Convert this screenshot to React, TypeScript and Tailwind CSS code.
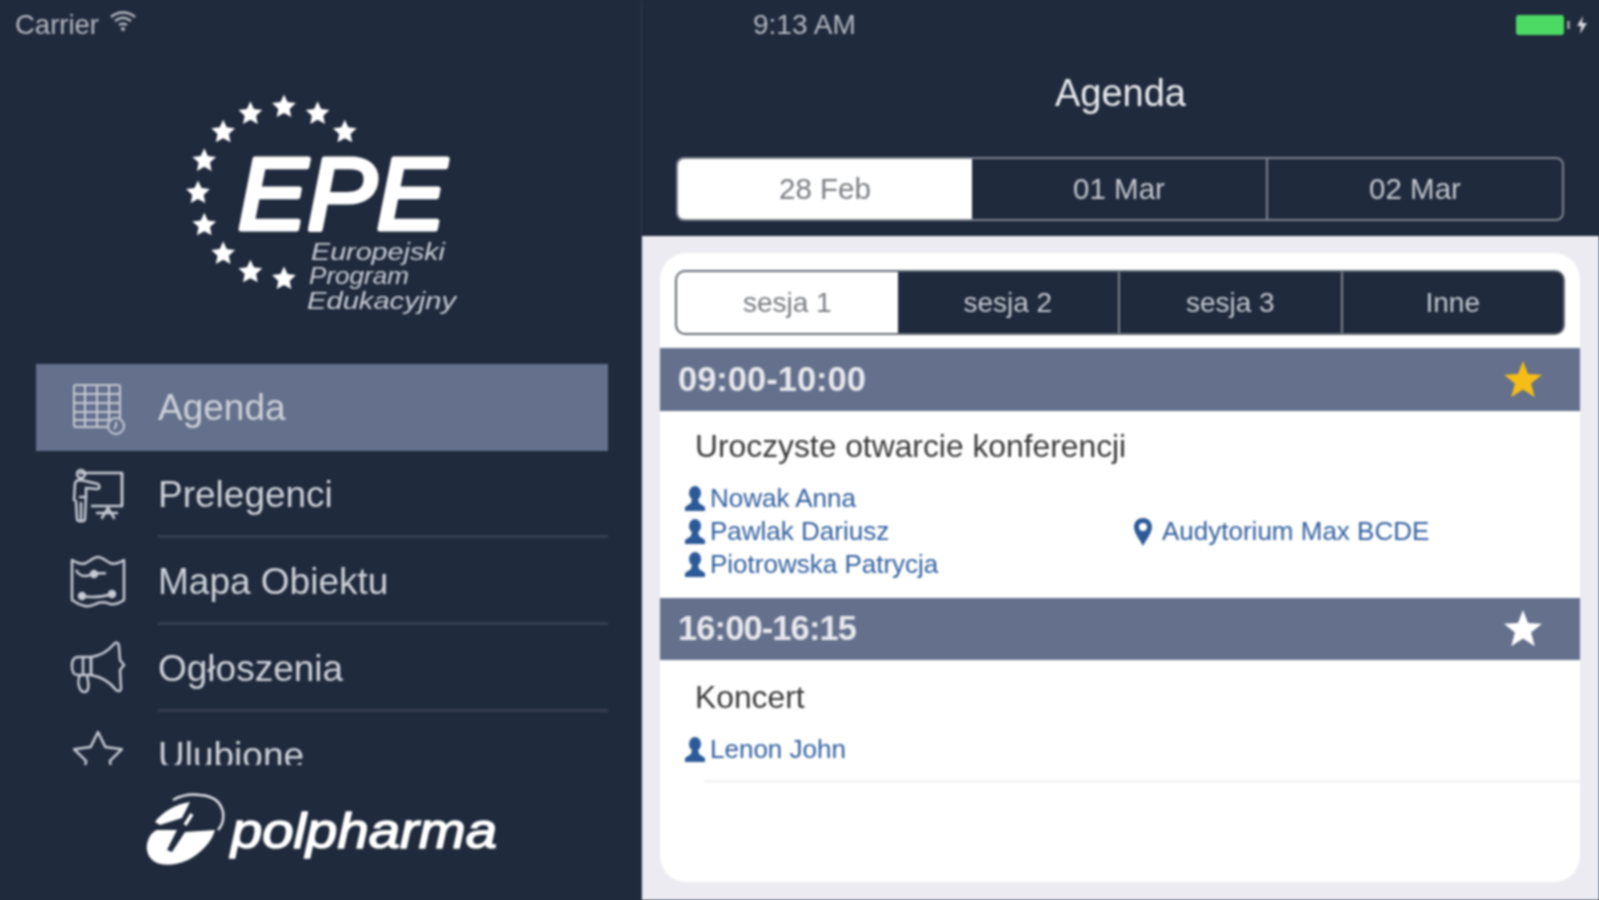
import React from 'react';

const sans = 'font-["Liberation_Sans",Arial,sans-serif]';

const starPoints = (cx: number, cy: number, outer: number, inner: number) => {
    const pts: string[] = [];
    for (let i = 0; i < 10; i++) {
        const r = i % 2 === 0 ? outer : inner;
        const a = (Math.PI / 5) * i - Math.PI / 2;
        pts.push(`${(cx + r * Math.cos(a)).toFixed(1)},${(cy + r * Math.sin(a)).toFixed(1)}`);
    }
    return pts.join(' ');
};

const CalendarIcon = () => (
    <svg width="56" height="56" viewBox="0 0 56 56" fill="none" stroke="#c5cad4" strokeWidth="2">
        <rect x="4" y="5" width="46" height="42" rx="2" />
        <path d="M4 14h46M4 23h46M4 32h46M4 40h40M15 5v42M27 5v42M39 5v36" />
        <circle cx="46" cy="46" r="8" fill="#64708c" />
        <path d="M46 42v4l-2 3" />
    </svg>
);

const PresenterIcon = () => (
    <svg width="56" height="56" viewBox="0 0 56 56" fill="none" stroke="#c5cad4" strokeWidth="2.500" strokeLinejoin="round" strokeLinecap="round">
        <path d="M10 6h42v33H22" />
        <path d="M52 6v33" />
        <circle cx="11" cy="7" r="4" />
        <path d="M5 17c0-3 3-4 6-4l17 4c2 1 2 5-1 5l-11-1v8l-1 23c0 3-8 3-8 0l-1-18-2-1z" />
        <path d="M10 30h6M11 36v16" />
        <path d="M38 41l-6 10M38 41l6 10M27 46h20" />
    </svg>
);

const MapIcon = () => (
    <svg width="56" height="56" viewBox="0 0 56 56" fill="none" stroke="#c5cad4" strokeWidth="2.500" strokeLinejoin="round">
        <path d="M2 6c5 3 9 5 14 3 4-2 8-6 12-6s8 4 12 6c5 2 9 0 14-3v40c-6 4-10 5-14 4-4-2-8-2-12-1-5 2-8 4-13 3-5-1-9-3-13-6z" />
        <path d="M6 16c3 6 8 7 14 5 6-3 12-1 16-2" />
        <circle cx="24" cy="20" r="3" fill="#c5cad4" />
        <circle cx="12" cy="42" r="3" fill="#c5cad4" />
        <circle cx="42" cy="40" r="3" fill="#c5cad4" />
        <path d="M12 42c9 2 20 1 30-2" />
    </svg>
);

const MegaphoneIcon = () => (
    <svg width="56" height="56" viewBox="0 0 56 56" fill="none" stroke="#c5cad4" strokeWidth="2.500" strokeLinejoin="round">
        <path d="M21 16c10-1 18-7 24-14 3-1 4 1 4 4l1 13 4 5-4 5 1 18c0 3-2 4-5 2-6-8-14-13-25-15z" />
        <path d="M21 16H8c-4 0-6 3-6 9 0 7 2 9 6 9h13z" />
        <path d="M10 34c-2 4-2 10 0 14 2 4 7 4 8 0 1-4 0-9-1-13" />
        <path d="M13 16v18" />
    </svg>
);

const StarOutlineIcon = () => (
    <svg width="56" height="56" viewBox="0 0 56 56" fill="none" stroke="#c5cad4" strokeWidth="2.500" strokeLinejoin="round">
        <polygon points={starPoints(28, 29, 25, 12.500)} />
    </svg>
);

const menu = [
    { label: 'Agenda', icon: <CalendarIcon />, active: true, line: false },
    { label: 'Prelegenci', icon: <PresenterIcon />, active: false, line: true },
    { label: 'Mapa Obiektu', icon: <MapIcon />, active: false, line: true },
    { label: 'Ogłoszenia', icon: <MegaphoneIcon />, active: false, line: true },
    { label: 'Ulubione', icon: <StarOutlineIcon />, active: false, line: false },
];

const EpeLogo = () => {
    const angles = [-90, -67, -45, -113, -135, -158, 180, 158, 135, 113, 90];
    return (
        <svg width="300" height="240" viewBox="0 0 300 240" className="ml-[178px] mt-[40px]">
            {angles.map((a) => {
                const x = 106 + 86 * Math.cos((a * Math.PI) / 180);
                const y = 103 + 86 * Math.sin((a * Math.PI) / 180);
                return <polygon key={a} points={starPoints(x, y, 12.500, 6)} fill="#ffffff" />;
            })}
            <text x="60" y="139" fill="#ffffff" stroke="#ffffff" strokeWidth="5" strokeLinejoin="round" fontFamily="Liberation Sans" fontStyle="italic" fontSize="102" textLength="208" lengthAdjust="spacingAndGlyphs">EPE</text>
            <g fill="#c9cdd6" fontFamily="Liberation Sans" fontStyle="italic" fontSize="23">
                <text x="133" y="170" textLength="134" lengthAdjust="spacingAndGlyphs">Europejski</text>
                <text x="131" y="194" textLength="100" lengthAdjust="spacingAndGlyphs">Program</text>
                <text x="129" y="219" textLength="149" lengthAdjust="spacingAndGlyphs">Edukacyjny</text>
            </g>
        </svg>
    );
};

const PolpharmaLogo = () => (
    <svg width="370" height="80" viewBox="0 0 370 80" className="ml-[144px] mt-[27px]">
        <path d="M3 52C5 44 8 40 13 38L33 38 23 58 28 60 41 40 71 38C68 50 56 62 44 68 30 74 18 74 11 70 4 66 2 58 3 52z" fill="#ffffff" />
        <path d="M11 30C18 20 32 12 46 10L38 26 16 33z" fill="#ffffff" />
        <path d="M29 8C38 3 48 2 56 3 68 4 76 8 79 20 80 28 78 34 74 38" fill="none" stroke="#dfe2e7" strokeWidth="2.500" />
        <path d="M48 22 41 33" stroke="#ffffff" strokeWidth="3.500" />
        <text x="87" y="56" fill="#ffffff" stroke="#ffffff" strokeWidth="1.500" strokeLinejoin="round" fontFamily="Liberation Sans" fontStyle="italic" fontSize="50" textLength="266" lengthAdjust="spacingAndGlyphs">polpharma</text>
    </svg>
);

const Segments: React.FC<{ items: string[]; className: string; textClass: string }> = ({ items, className, textClass }) => (
    <div className={`flex border-2 overflow-hidden bg-[#1f2a3c] ${className}`}>
        {items.map((item, i) => (
            <div
                key={item}
                className={`flex-1 flex items-center justify-center ${textClass} ${
                    i === 0 ? 'bg-white text-[#7a7d82]' : 'text-[#c3c7ce]'
                } ${i > 1 ? 'border-l-2 border-[#7d838e]' : ''}`}
            >
                {item}
            </div>
        ))}
    </div>
);

const Person = () => (
    <svg width="24" height="28" viewBox="0 0 24 28" fill="#2c5a98" className="shrink-0">
        <ellipse cx="12" cy="8" rx="6" ry="7" />
        <path d="M9 13h6l1 5 6 4v4H2v-4l6-4z" />
    </svg>
);

const Pin = () => (
    <svg width="20" height="30" viewBox="0 0 20 30" className="shrink-0">
        <path d="M10 1C4.500 1 1 5 1 10c0 6 6 13 9 19 3-6 9-13 9-19 0-5-3.500-9-9-9z" fill="#2c5a98" />
        <circle cx="10" cy="10" r="4" fill="#ffffff" />
    </svg>
);

const SlotHeader: React.FC<{ time: string; fav: boolean; className: string }> = ({ time, fav, className }) => (
    <div className={`flex items-center justify-between pl-[18px] pr-[38px] bg-[#64708c] ${className}`}>
        <span className="text-[34.500px] font-bold text-[#e6e8ec]">{time}</span>
        <svg width="38" height="38" viewBox="0 0 38 38">
            <polygon points={starPoints(19, 20, 20, 8.500)} fill={fav ? '#f6bd16' : '#ffffff'} />
        </svg>
    </div>
);

const SpeakerRow: React.FC<{ name: string }> = ({ name }) => (
    <div className="flex items-center h-[33px] gap-[3px] text-[26px] text-[#33609e]">
        <Person />
        <span>{name}</span>
    </div>
);

export default function App() {
    return (
        <div className="w-[1599px] h-[900px] overflow-hidden bg-[#1f2a3c]">
            <div className={`flex w-[1599px] h-[900px] bg-[#1f2a3c] blur-[0.8px] ${sans}`}>
                {/* side menu */}
                <aside className="w-[642px] shrink-0 border-r border-[#323d50] flex flex-col">
                    <div className="flex items-center h-[50px] pl-[15px] gap-[10px] text-[27.500px] text-[#b4b8c0]">
                        <span>Carrier</span>
                        <svg width="28" height="22" viewBox="0 0 28 22" fill="none" stroke="#b4b8c0" strokeWidth="2.500" className="-mt-[6px]">
                            <path d="M2 6c7-6 17-6 24 0M6 10c5-4 11-4 16 0M10 14c3-2 5-2 8 0" />
                            <circle cx="14" cy="18" r="2" fill="#b4b8c0" stroke="none" />
                        </svg>
                    </div>
                    <EpeLogo />
                    <div className="h-[401px] mt-[34px] overflow-hidden ml-[36px] mr-[33px]">
                        {menu.map((m) => (
                            <div key={m.label} className={`flex h-[87px] ${m.active ? 'bg-[#64708c]' : ''}`}>
                                <div className="w-[122px] pl-[34px] shrink-0 flex items-center">{m.icon}</div>
                                <div className={`flex-1 flex items-center text-[37px] text-[#cdd1d9] ${m.line ? 'shadow-[inset_0_-3px_0_#353f51]' : ''}`}>
                                    {m.label}
                                </div>
                            </div>
                        ))}
                    </div>
                    <PolpharmaLogo />
                </aside>

                {/* agenda */}
                <main className="flex-1 flex flex-col min-w-0">
                    <div className="h-[236px] shrink-0 flex flex-col">
                        <div className="flex items-center justify-between h-[50px] pl-[111px] pr-[12px] text-[28px] text-[#b4b8c0]">
                            <span>9:13 AM</span>
                            <div className="flex items-center gap-[3px]">
                                <div className="w-[48px] h-[20px] rounded-[3px] bg-[#4cd964]"></div>
                                <div className="w-[3px] h-[8px] bg-[#8d929b] mr-[4px]"></div>
                                <svg width="10" height="18" viewBox="0 0 10 18" fill="#d5d8dd">
                                    <path d="M6 0 0 10h4l-1 8 7-11H5z" />
                                </svg>
                            </div>
                        </div>
                        <div className="h-[87px] flex items-center justify-center text-[38px] text-[#e8eaee]">Agenda</div>
                        <Segments
                            items={['28 Feb', '01 Mar', '02 Mar']}
                            className="h-[64px] mt-[20px] ml-[34px] w-[888px] rounded-[8px] border-[#7d838e]"
                            textClass="text-[29.500px]"
                        />
                    </div>

                    <div className="flex-1 bg-[#ebebf1] pl-[18px] pr-[19px] pt-[17px] pb-[18px] min-h-0">
                        <div className="h-full bg-white rounded-[26px] overflow-hidden pt-[17px]">
                            <Segments
                                items={['sesja 1', 'sesja 2', 'sesja 3', 'Inne']}
                                className="h-[65px] ml-[15px] mr-[15px] rounded-[10px] border-[#666b74]"
                                textClass="text-[28px]"
                            />
                            <SlotHeader time="09:00-10:00" fav className="h-[63px] mt-[13px]" />
                            <div className="pt-[16px] pl-[35px] h-[54px] leading-[38px] text-[31.800px] text-[#3a3a3c]">
                                Uroczyste otwarcie konferencji
                            </div>
                            <div className="grid grid-cols-[450px_1fr] pl-[23px] pt-[17px] pb-[17px]">
                                <div>
                                    <SpeakerRow name="Nowak Anna" />
                                    <SpeakerRow name="Pawlak Dariusz" />
                                    <SpeakerRow name="Piotrowska Patrycja" />
                                </div>
                                <div className="flex items-center gap-[9px] text-[26px] text-[#33609e]">
                                    <Pin />
                                    <span>Audytorium Max BCDE</span>
                                </div>
                            </div>
                            <SlotHeader time="16:00-16:15" fav={false} className="h-[62px] tracking-[-0.9px]" />
                            <div className="pt-[18px] pl-[35px] leading-[38px] text-[31.800px] text-[#3a3a3c]">Koncert</div>
                            <div className="pl-[23px] pt-[17px]">
                                <SpeakerRow name="Lenon John" />
                            </div>
                            <div className="ml-[44px] mt-[14px] h-[3px] bg-[#f3f3f5]"></div>
                        </div>
                    </div>
                </main>
            </div>
        </div>
    );
}
